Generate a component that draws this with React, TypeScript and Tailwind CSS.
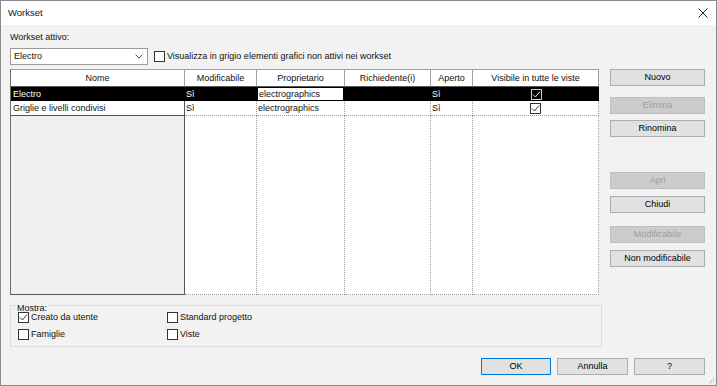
import React from "react";

const rows = [
  { nome: "Electro", mod: "Sì", owner: "electrographics", req: "", open: "Sì", vis: true, selected: true },
  { nome: "Griglie e livelli condivisi", mod: "Sì", owner: "electrographics", req: "", open: "Sì", vis: true, selected: false },
];

function Check({ checked, dark }: { checked?: boolean; dark?: boolean }) {
  return (
    <div
      className={`flex h-[11px] w-[11px] shrink-0 items-center justify-center border ${
        dark ? "border-[#d0d0d0] bg-black" : "border-[#333333] bg-white"
      }`}
    >
      {checked && (
        <svg width="9" height="9" viewBox="0 0 9 9">
          <path d="M1 4.5 L3.4 7 L8 1.5" fill="none" stroke={dark ? "#e0e0e0" : "#333"} strokeWidth="1" />
        </svg>
      )}
    </div>
  );
}

function Btn({ label, disabled, primary, className = "" }: { label: string; disabled?: boolean; primary?: boolean; className?: string }) {
  return (
    <div
      className={`flex h-[17px] items-center justify-center border ${
        disabled
          ? "border-[#bfbfbf] bg-[#cccccc] text-[#9d9d9d]"
          : primary
          ? "border-[#0078d7] bg-[#e1e1e1] text-black"
          : "border-[#adadad] bg-[#e1e1e1] text-black"
      } ${className}`}
    >
      {label}
    </div>
  );
}

export default function App() {
  return (
    <div className="flex h-[386px] w-[717px] flex-col border border-[#8a8a8a] bg-[#f2f2f2] font-['Liberation_Sans',Arial,sans-serif] text-[9px] leading-none text-[#111]">
      {/* title bar */}
      <div className="flex h-[24px] shrink-0 items-center justify-between bg-white pl-[7px] pr-[8px]">
        <span className="text-[9.5px]">Workset</span>
        <svg width="10" height="10" viewBox="0 0 10 10">
          <path d="M0.5 0.5 L9.5 9.5 M9.5 0.5 L0.5 9.5" stroke="#222" strokeWidth="1" />
        </svg>
      </div>

      <div className="flex flex-1 flex-col pl-[9px]">
        <div className="mt-[6px] flex h-[12px] items-center">Workset attivo:</div>
        <div className="mt-[5px] flex items-center">
          <div className="flex h-[17px] w-[138px] items-center justify-between border border-[#9a9a9a] bg-white pl-[3px] pr-[4px]">
            <span>Electro</span>
            <svg width="8" height="5" viewBox="0 0 8 5">
              <path d="M0.5 0.5 L4 4 L7.5 0.5" fill="none" stroke="#555" strokeWidth="1" />
            </svg>
          </div>
          <div className="ml-[6px] flex items-center gap-[2px]">
            <Check />
            <span>Visualizza in grigio elementi grafici non attivi nei workset</span>
          </div>
        </div>

        <div className="mt-[4px] flex">
          <div className="flex w-[592px] flex-col">
            {/* table */}
            <div className="grid h-[226px] w-[589px] grid-cols-[174px_72px_88px_86px_42px_126px] grid-rows-[17px_14px_15px_1fr] border-l border-t border-[#6e6e6e] border-t-[#a0a0a0]">
              {["Nome", "Modificabile", "Proprietario", "Richiedente(i)", "Aperto", "Visibile in tutte le viste"].map((h) => (
                <div key={h} className="flex items-center justify-center border-b border-r border-[#a0a0a0] border-b-[#555555] bg-white">
                  {h}
                </div>
              ))}
              {rows.map((r) => (
                <React.Fragment key={r.nome}>
                  <div
                    className={`flex items-center border-r pl-[2px] ${
                      r.selected ? "border-black bg-black text-white" : "border-b border-[#555555] bg-white"
                    }`}
                  >
                    {r.nome}
                  </div>
                  <div className={`flex items-center pl-[1px] ${r.selected ? "bg-black text-white" : "border-b border-r border-dotted border-[#a0a0a0] bg-white"}`}>
                    {r.mod}
                  </div>
                  <div className={`flex items-stretch ${r.selected ? "bg-black p-[1px] pr-[2px]" : "border-b border-r border-dotted border-[#a0a0a0] bg-white"}`}>
                    <div className={`flex flex-1 items-center pl-[1px] ${r.selected ? "bg-white" : ""}`}>{r.owner}</div>
                  </div>
                  <div className={`${r.selected ? "bg-black" : "border-b border-r border-dotted border-[#a0a0a0] bg-white"}`}>{r.req}</div>
                  <div className={`flex items-center pl-[1px] ${r.selected ? "bg-black text-white" : "border-b border-r border-dotted border-[#a0a0a0] bg-white"}`}>
                    {r.open}
                  </div>
                  <div className={`flex items-center justify-center ${r.selected ? "bg-black" : "border-b border-r border-dotted border-[#a0a0a0] bg-white"}`}>
                    <Check checked={r.vis} dark={r.selected} />
                  </div>
                </React.Fragment>
              ))}
              <div className="border-b border-r border-[#555555] bg-[#f0f0f0]" />
              <div className="border-b border-r border-dotted border-[#a0a0a0] bg-white" />
              <div className="border-b border-r border-dotted border-[#a0a0a0] bg-white" />
              <div className="border-b border-r border-dotted border-[#a0a0a0] bg-white" />
              <div className="border-b border-r border-dotted border-[#a0a0a0] bg-white" />
              <div className="border-b border-r border-dotted border-[#a0a0a0] bg-white" />
            </div>

            {/* Mostra group */}
            <fieldset className="mt-[6px] h-[46px] border border-[#dcdcdc] pl-[7px]">
              <legend className="-ml-[2px] px-[1px]">
                <span className="relative top-[3px]">Mostra:</span>
              </legend>
              <div className="mt-[2px] grid grid-cols-[149px_1fr] gap-y-[6px]">
                {[
                  ["Creato da utente", true],
                  ["Standard progetto", false],
                  ["Famiglie", false],
                  ["Viste", false],
                ].map(([l, c]) => (
                  <div key={l as string} className="flex items-center gap-[2px]">
                    <Check checked={c as boolean} />
                    <span>{l as string}</span>
                  </div>
                ))}
              </div>
            </fieldset>
          </div>

          {/* right buttons */}
          <div className="ml-[8px] flex w-[95px] flex-col">
            <Btn label="Nuovo" />
            <Btn label="Elimina" disabled className="mt-[11px]" />
            <Btn label="Rinomina" className="mt-[6px]" />
            <Btn label="Apri" disabled className="mt-[35px]" />
            <Btn label="Chiudi" className="mt-[7px]" />
            <Btn label="Modificabile" disabled className="mt-[13px]" />
            <Btn label="Non modificabile" className="mt-[7px]" />
          </div>
        </div>

        <div className="mt-[11px] flex justify-end gap-[6px] pr-[11px]">
          <Btn label="OK" primary className="w-[70px]" />
          <Btn label="Annulla" className="w-[71px]" />
          <Btn label="?" className="w-[71px]" />
        </div>
        <div className="flex flex-1 items-end justify-end pb-[1px] pr-[1px]">
          <svg width="6" height="6" viewBox="0 0 6 6">
            <rect x="4" y="0" width="1" height="1" fill="#aaa" />
            <rect x="2" y="2" width="1" height="1" fill="#aaa" />
            <rect x="4" y="2" width="1" height="1" fill="#aaa" />
            <rect x="0" y="4" width="1" height="1" fill="#aaa" />
            <rect x="2" y="4" width="1" height="1" fill="#aaa" />
            <rect x="4" y="4" width="1" height="1" fill="#aaa" />
          </svg>
        </div>
      </div>
    </div>
  );
}
